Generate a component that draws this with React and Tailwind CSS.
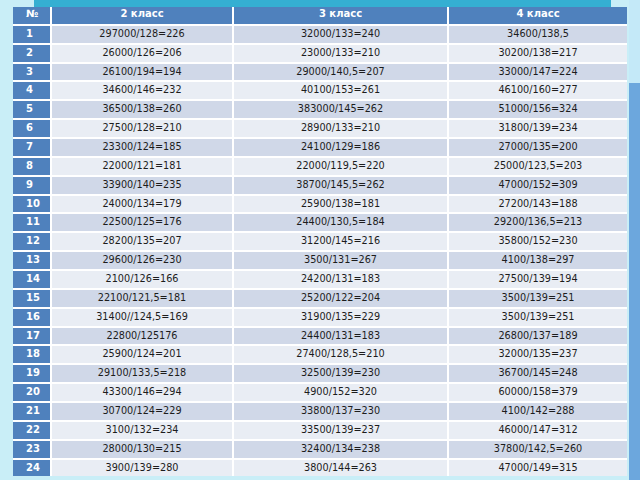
import React from 'react';

const rows = [
  ['297000/128=226', '32000/133=240', '34600/138,5'],
  ['26000/126=206', '23000/133=210', '30200/138=217'],
  ['26100/194=194', '29000/140,5=207', '33000/147=224'],
  ['34600/146=232', '40100/153=261', '46100/160=277'],
  ['36500/138=260', '383000/145=262', '51000/156=324'],
  ['27500/128=210', '28900/133=210', '31800/139=234'],
  ['23300/124=185', '24100/129=186', '27000/135=200'],
  ['22000/121=181', '22000/119,5=220', '25000/123,5=203'],
  ['33900/140=235', '38700/145,5=262', '47000/152=309'],
  ['24000/134=179', '25900/138=181', '27200/143=188'],
  ['22500/125=176', '24400/130,5=184', '29200/136,5=213'],
  ['28200/135=207', '31200/145=216', '35800/152=230'],
  ['29600/126=230', '3500/131=267', '4100/138=297'],
  ['2100/126=166', '24200/131=183', '27500/139=194'],
  ['22100/121,5=181', '25200/122=204', '3500/139=251'],
  ['31400//124,5=169', '31900/135=229', '3500/139=251'],
  ['22800/125176', '24400/131=183', '26800/137=189'],
  ['25900/124=201', '27400/128,5=210', '32000/135=237'],
  ['29100/133,5=218', '32500/139=230', '36700/145=248'],
  ['43300/146=294', '4900/152=320', '60000/158=379'],
  ['30700/124=229', '33800/137=230', '4100/142=288'],
  ['3100/132=234', '33500/139=237', '46000/147=312'],
  ['28000/130=215', '32400/134=238', '37800/142,5=260'],
  ['3900/139=280', '3800/144=263', '47000/149=315'],
];

const headers = ['2 класс', '3 класс', '4 класс'];

export default function App() {
  return (
    <div
      className="w-[640px] h-[480px] overflow-hidden flex bg-[#c9eef7]"
      style={{ fontFamily: '"DejaVu Sans", sans-serif' }}
    >
      <div className="w-[629px] flex flex-col">
        {/* teal strip above the table */}
        <div className="h-[7px] ml-[34px] w-[577px] bg-[#35afd2]" />

        <div className="ml-[13px] w-[614px] grid grid-cols-[37px_180px_213px_178px] gap-x-[2px] gap-y-[2px] bg-white auto-rows-[16.87px]">
          <div className="h-[17px] bg-[#4f81bd] text-white font-bold text-[10px] leading-[14px] pl-[13px]">№</div>
          {headers.map((h) => (
            <div key={h} className="h-[17px] bg-[#4f81bd] text-white font-bold text-[10px] leading-[14px] text-center">
              {h}
            </div>
          ))}

          {rows.map((r, i) => {
            const bg = i % 2 === 0 ? 'bg-[#d0d8e8]' : 'bg-[#e9edf4]';
            return (
              <React.Fragment key={i}>
                <div className="bg-[#4f81bd] text-white font-bold text-[10px] leading-[15px] pl-[13px]">{i + 1}</div>
                {r.map((v, j) => (
                  <div key={j} className={`${bg} text-[#1c1c1c] text-[9.7px] leading-[15px] text-center`}>
                    {v}
                  </div>
                ))}
              </React.Fragment>
            );
          })}
        </div>
      </div>

      <div className="w-[11px] flex flex-col">
        <div className="h-[83px] bg-[#c4e9f8]" />
        <div className="flex-1 bg-[#6ca7dd]" />
      </div>
    </div>
  );
}
